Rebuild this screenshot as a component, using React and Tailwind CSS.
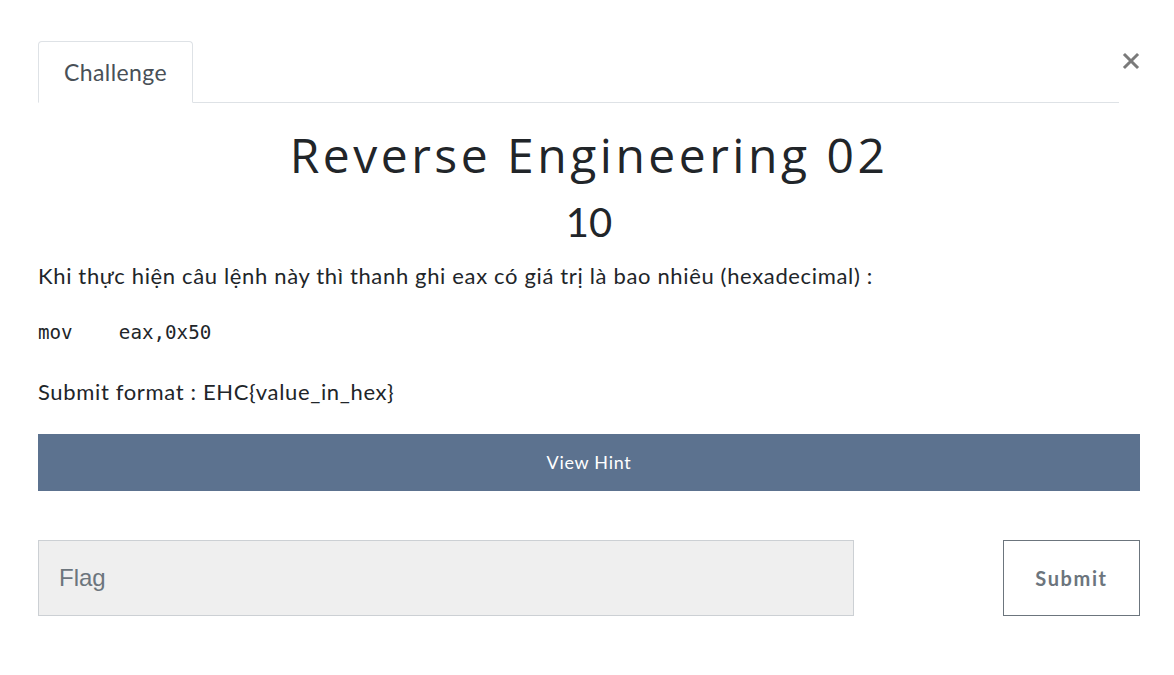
export default function App() {
  return (
    <div className="w-[1174px] h-[675px] bg-white" style={{ fontFamily: "Lato, 'Noto Sans', sans-serif" }}>
      <div className="pl-[38px] pr-[34px] pt-[41px]">
        <div className="flex items-start">
          <div className="flex-1 flex border-b border-[#dee2e6]">
            <div className="-mb-px w-[155px] h-[62px] border border-b-white border-[#dee2e6] rounded-t-[4px] flex items-center justify-center text-[23px] tracking-[0.4px] text-[#495057] bg-white">
              Challenge
            </div>
          </div>
          <div className="w-[21px] flex justify-end pt-[11px] text-[#777]">
            <svg width="18" height="18" viewBox="0 0 18 18"><path d="M3 3 L15 15 M15 3 L3 15" stroke="#7a7a7a" strokeWidth="3" strokeLinecap="square" /></svg>
          </div>
        </div>
        <div>
          <h2 className="text-center text-[48px] leading-[56px] mt-[24px] text-[#212529] tracking-[3.5px]" style={{ fontFamily: "'Open Sans', Lato, sans-serif", fontWeight: 400 }}>
            Reverse Engineering 02
          </h2>
          <h3 className="text-center text-[40px] leading-[48px] mt-[15px] text-[#212529]">10</h3>
          <p className="text-[22px] tracking-[0.65px] text-[#212529] mt-[15px] leading-[30px]">
            Khi thực hiện câu lệnh này thì thanh ghi eax có giá trị là bao nhiêu (hexadecimal) :
          </p>
          <pre className="mt-[30px] text-[19.2px] leading-[24px] text-[#212529]" style={{ fontFamily: "'DejaVu Sans Mono', 'Liberation Mono', monospace" }}>mov    eax,0x50</pre>
          <p className="text-[22px] tracking-[0.65px] text-[#212529] mt-[32px] leading-[30px]">Submit format : EHC{"{"}value_in_hex{"}"}</p>
          <div className="mt-[27px] h-[57px] bg-[#5c728f] flex items-center justify-center text-white text-[18px] tracking-[0.7px]">
            View Hint
          </div>
          <div className="mt-[49px] flex justify-between">
            <div className="w-[816px] h-[76px] bg-[#efefef] border border-[#ccd0d4] flex items-center pl-[20px] text-[24px] text-[#6c757d]" style={{ fontFamily: "'Liberation Sans', Arial, sans-serif" }}>
              Flag
            </div>
            <div className="w-[137px] h-[76px] border border-[#6c757d] flex items-center justify-center text-[20px] font-bold text-[#6c757d] tracking-[1.6px]">
              Submit
            </div>
          </div>
        </div>
      </div>
    </div>
  );
}
